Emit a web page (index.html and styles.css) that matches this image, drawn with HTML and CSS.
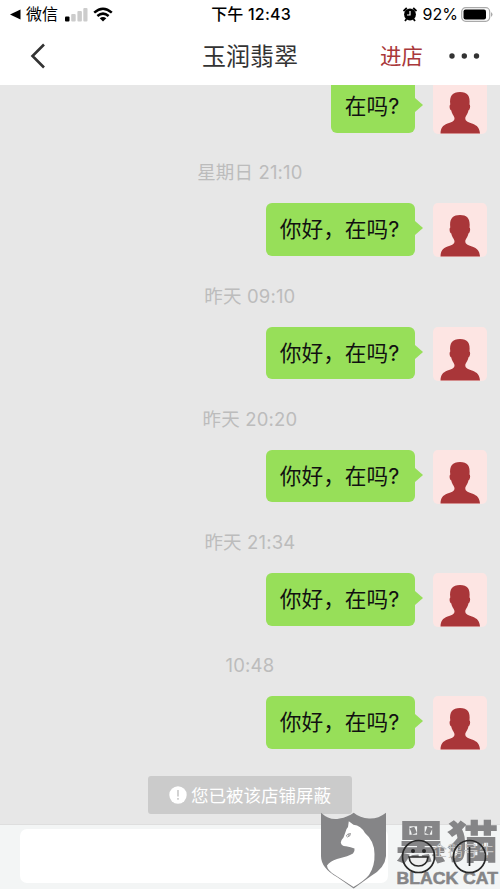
FILE: index.html
```html
<!DOCTYPE html>
<html lang="zh-CN">
<head>
<meta charset="utf-8">
<title>玉润翡翠</title>
<link rel="stylesheet" href="styles.css">
</head>
<body>
<svg class="defs" width="0" height="0">
  <symbol id="person" viewBox="0 0 54 54">
    <path d="M7.500 53.500C7.700 48 9.500 45.500 14.500 43.500C19 42 21.500 41 21.500 38.500C21.500 36 19 34.500 18.300 30.500C16.600 30 16 25.500 17.300 24.600C16.200 16 19.500 12 27 12C34.500 12 37.500 16 36.500 24.600C37.800 25.500 37 30 35.400 30.500C34.700 34.500 32.300 36 32.300 38.500C32.300 41 35 42 39 43.500C44.500 45.500 46.500 48 47 53.500Z" fill="#a93639"/>
  </symbol>
</svg>
<div class="phone">
  <header class="status">
    <div class="status-left">
      <svg width="11" height="11" viewBox="0 0 11 11"><path d="M0 5.500L10.500 0.500V10.500Z"/></svg>
      <span class="app">微信</span>
      <svg class="signal" width="23" height="15" viewBox="0 0 23 15"><rect x="0" y="9.500" width="4.500" height="5" rx="1"/><g fill="#ccc"><rect x="6.200" y="7" width="4.500" height="7.500" rx="1"/><rect x="12.400" y="4" width="4.500" height="10.500" rx="1"/><rect x="18.300" y="1" width="4.200" height="13.500" rx="1"/></g></svg>
      <svg class="wifi" width="20" height="15" viewBox="0 0 20 15"><g fill="none" stroke="#000" stroke-width="2.500"><path d="M1.200 5.600Q10-2.200 18.800 5.600"/><path d="M4.400 9Q10 4.200 15.600 9"/></g><path d="M6.700 11.300Q10 8.500 13.300 11.300L10 14.600Z"/></svg>
    </div>
    <div class="clock">下午 12:43</div>
    <div class="status-right">
      <svg width="14" height="15" viewBox="0 0 14 15"><circle cx="7" cy="7.500" r="5.900"/><path d="M.5 4L3.800 1M13.500 4L10.200 1M3.500 12L2 14M10.500 12L12 14" stroke="#000" stroke-width="1.800"/><path d="M7 4V8H4" fill="none" stroke="#fff" stroke-width="1.200"/></svg>
      <span class="percent">92%</span>
      <svg width="32" height="15" viewBox="0 0 32 15"><rect x=".7" y=".7" width="28" height="13.600" rx="4" fill="none" stroke="#aaa" stroke-width="1.200"/><rect x="2.500" y="2.500" width="22.500" height="10" rx="2"/><path d="M30 5Q33 7.500 30 10Z" fill="#aaa"/></svg>
    </div>
  </header>
  <nav class="nav">
    <svg class="back" width="16" height="26" viewBox="0 0 16 26"><path d="M14 1.500L2.500 13L14 24.500" fill="none" stroke="#333" stroke-width="2.600"/></svg>
    <h1>玉润翡翠</h1>
    <div class="actions"><span>进店</span><svg width="31" height="6" viewBox="0 0 31 6" fill="#333"><circle cx="3" cy="3" r="2.700"/><circle cx="15.300" cy="3" r="2.700"/><circle cx="27.500" cy="3" r="2.700"/></svg></div>
  </nav>
  <main class="chat">
    <div class="row"><div class="bubble">在吗?</div><svg class="avatar"><use href="#person"/></svg></div>
    <div class="time">星期日 21:10</div>
    <div class="row"><div class="bubble">你好，在吗?</div><svg class="avatar"><use href="#person"/></svg></div>
    <div class="time">昨天 09:10</div>
    <div class="row"><div class="bubble">你好，在吗?</div><svg class="avatar"><use href="#person"/></svg></div>
    <div class="time">昨天 20:20</div>
    <div class="row"><div class="bubble">你好，在吗?</div><svg class="avatar"><use href="#person"/></svg></div>
    <div class="time">昨天 21:34</div>
    <div class="row"><div class="bubble">你好，在吗?</div><svg class="avatar"><use href="#person"/></svg></div>
    <div class="time">10:48</div>
    <div class="row"><div class="bubble">你好，在吗?</div><svg class="avatar"><use href="#person"/></svg></div>
    <div class="notice"><svg width="18" height="18" viewBox="0 0 18 18"><circle cx="9" cy="9" r="8.700" fill="#fff"/><path d="M9 4V10.500M9 12V13.800" stroke="#c8c8c8" stroke-width="1.600"/></svg><span>您已被该店铺屏蔽</span></div>
  </main>
  <footer class="composer"><div class="field"></div></footer>
  <svg class="watermark" width="190" height="89" viewBox="0 0 190 89">
    <path d="M11 12.700Q20 21 29.500 18.500Q38 17 43.700 12.700Q50 18 59 18.500Q68 19 76 12.700V56Q75 68 61 76L43.700 88.500L27 77Q11 68 11 56Z" fill="#858587"/>
    <path d="M38.800 21.300L43.500 24.700Q51 25.500 55 33Q64.500 41 64.500 54Q65 66 59 75Q54 81 43.500 87L25 75Q17 70 17 65.500Q20 61 27 59Q39 56 43 53.500Q45 51 44.500 48.500Q41 47 36 46.300Q31.500 46.500 30.800 42.500Q31 40 33.500 37.500L35.500 32Q36 29 38 27Z" fill="#fff"/>
    <path d="M36.300 36Q37 33.500 40.500 33.500Q40.500 36.500 37.500 37Z" fill="#fff" stroke="#858587" stroke-width=".8"/><circle cx="38.800" cy="35" r=".8" fill="#858587"/>
    <g class="brand"><text class="brand-cn" transform="translate(85 58.500) scale(1.080 .94)" textLength="96">黑猫</text>
    <text class="brand-en" x="86.500" y="83.500" textLength="101.500" lengthAdjust="spacingAndGlyphs">BLACK CAT</text></g>
    <text class="brand-sub" x="122" y="56" textLength="62">企鹅号牛</text>
    <g fill="none" stroke="#282828" stroke-width="1.700"><circle cx="108.500" cy="56.500" r="16"/><path d="M99 57H118Q117 66 108.500 66Q100 66 99 57Z" fill="#eee"/><circle cx="159.500" cy="56.500" r="16"/><path d="M159.500 47V66"/></g>
    <circle cx="103" cy="51" r="2" fill="#282828"/><circle cx="114" cy="51" r="2" fill="#282828"/>
  </svg>
</div>
</body>
</html>
```
FILE: styles.css
```css
* { box-sizing: border-box; }
body { margin: 0; font-family: Inter, "Noto Sans CJK SC", sans-serif; }
svg { display: block; flex: none; }
.defs { position: absolute; }
.phone { position: relative; width: 500px; height: 889px; overflow: hidden; display: flex; flex-direction: column; background: #fff; }
.status { flex: none; height: 27px; display: grid; grid-template-columns: 1fr auto 1fr; align-items: center; padding: 0 7px 0 10px; font-size: 16px; line-height: 27px; }
.status-left, .status-right { display: flex; align-items: center; }
.status-right { justify-content: flex-end; }
.app { margin-left: 5px; padding-top: 1px; }
.signal { margin-left: 7px; }
.wifi { margin-left: 5px; }
.clock { font-weight: 500; font-size: 16px; letter-spacing: .2px; margin-left: -1px; }
.percent { margin: 0 3px 0 6px; padding-top: 1px; }
.nav { flex: none; height: 58px; display: grid; grid-template-columns: 1fr auto 1fr; align-items: center; padding: 0 20px 0 30px; }
.nav h1 { margin: 2px 0 0 -10px; font-size: 24px; font-weight: 400; line-height: 36px; color: #333; }
.actions { display: flex; justify-content: flex-end; align-items: center; gap: 26px; color: #a9383b; font-size: 21.500px; line-height: 34px; }
.chat { flex: none; height: 739px; overflow: hidden; background: #e7e7e7; padding: 0 13.200px 0 0; }
.row { height: 53.300px; display: flex; justify-content: flex-end; gap: 18px; }
.row:first-child { margin-top: -5px; }
.bubble { position: relative; height: 52.500px; padding: 0 15.500px 0 13.500px; border-radius: 6px; background: #97df59; color: #111; font-size: 21.700px; line-height: 52.500px; white-space: nowrap; }
.bubble::after { content: ""; position: absolute; left: 100%; top: 18px; border: solid transparent; border-width: 7px 0 7px 8px; border-left-color: #97df59; }
.avatar { width: 54px; height: 54px; border-radius: 5px; background: #fde5e3; }
.time { height: 70px; padding: 9px 0 0 13px; text-align: center; font-size: 18.500px; line-height: 61.500px; letter-spacing: .15px; color: #bcbcbc; }
.notice { width: 204px; height: 38px; margin: 26px 0 0 148px; border-radius: 3px; background: #cbcbcb; color: #fff; display: flex; align-items: center; justify-content: center; gap: 4px; font-size: 17.500px; }
.composer { flex: none; height: 65px; padding: 4px 112px 7px 20px; background: #f3f5f5; border-top: 1px solid #dedede; }
.field { width: 368px; height: 54px; border-radius: 7px; background: #fff; }
.watermark { position: absolute; left: 310px; top: 800px; }
.brand { fill: #858587; }
.brand-cn { font: 900 48px "Noto Sans CJK SC", sans-serif; }
.brand-en { font: bold 16.500px "Liberation Sans", sans-serif; stroke: #858587; stroke-width: .5; }
.brand-sub { font: 15px "Noto Sans CJK SC", sans-serif; fill: #c5c5c5; }
```
